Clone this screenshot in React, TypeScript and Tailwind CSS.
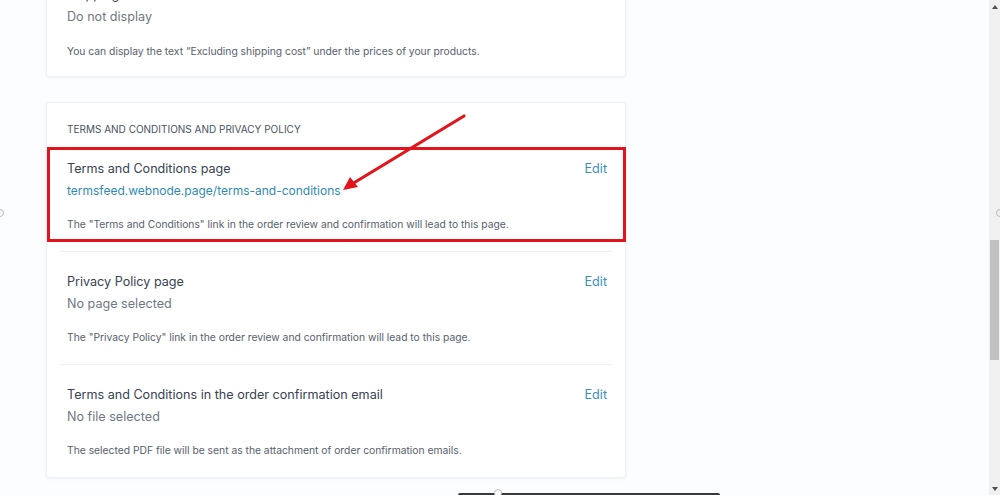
import React from 'react';

interface SettingRowProps {
  title: string;
  value: string;
  isLink?: boolean;
  description: string;
  divider?: boolean;
}

const SettingRow: React.FC<SettingRowProps> = ({ title, value, isLink, description, divider }) => {
  return (
    <div className={`px-[7px] ${divider ? 'border-t border-[#eceef1]' : ''}`}>
      <div className="flex items-start justify-between pt-[21px]">
        <div className="text-[12.6px] leading-[18px] text-[#364352]">{title}</div>
        <button className="text-[12.6px] leading-[18px] text-[#3b8fbf] mr-[-2px]">Edit</button>
      </div>
      <div className={`mt-[4px] leading-[18px] ${isLink ? 'text-[12px] text-[#2f8bb1]' : 'text-[12.6px] text-[#6f7882]'}`}>
        {value}
      </div>
      <div className="mt-[17px] pb-[20px] text-[10.3px] leading-[14px] text-[#56616c]">{description}</div>
    </div>
  );
};

const App: React.FC = () => {
  return (
    <div
      className="relative w-[1000px] h-[495px] overflow-hidden bg-[#fcfdfe]"
      style={{ fontFamily: 'Inter, "Liberation Sans", sans-serif' }}
    >
      <div className="w-[989px] h-full pl-[46px] pt-0">
        {/* shipping card, scrolled partly off the top */}
        <div className="w-[580px] -mt-[25px] bg-white border border-[#eef0f3] rounded-[3px] shadow-[0_1px_3px_rgba(30,50,80,0.06)] px-[20px]">
          <div className="pt-[10px] text-[12.6px] leading-[18px] text-[#364352]">Shipping cost</div>
          <div className="mt-[4px] text-[12.6px] leading-[18px] text-[#6f7882]">Do not display</div>
          <div className="mt-[18px] pb-[18px] text-[10.3px] leading-[14px] text-[#56616c]">
            You can display the text “Excluding shipping cost” under the prices of your products.
          </div>
        </div>

        {/* terms card */}
        <div className="relative w-[580px] mt-[25px] bg-white border border-[#eef0f3] rounded-[3px] shadow-[0_1px_3px_rgba(30,50,80,0.06)] px-[13px]">
          <div className="px-[7px] pt-[19px] pb-[3px] text-[10px] leading-[14px] text-[#465260] uppercase">
            Terms and Conditions and Privacy Policy
          </div>
          <SettingRow
            title="Terms and Conditions page"
            value="termsfeed.webnode.page/terms-and-conditions"
            isLink
            description={'The "Terms and Conditions" link in the order review and confirmation will lead to this page.'}
          />
          <SettingRow
            title="Privacy Policy page"
            value="No page selected"
            description={'The "Privacy Policy" link in the order review and confirmation will lead to this page.'}
            divider
          />
          <SettingRow
            title="Terms and Conditions in the order confirmation email"
            value="No file selected"
            description="The selected PDF file will be sent as the attachment of order confirmation emails."
            divider
          />

          {/* red annotation box */}
          <div className="absolute left-0 top-[44px] w-[579px] h-[95px] border-[3px] border-[#e3141b] pointer-events-none"></div>
        </div>
      </div>

      {/* annotation arrow */}
      <svg className="absolute left-0 top-0 pointer-events-none" width="1000" height="495">
        <line x1="464" y1="116" x2="352" y2="184" stroke="#e3141b" strokeWidth="3.2" strokeLinecap="round" />
        <polygon points="343,190 350,177 358,187" fill="#e3141b" />
      </svg>

      {/* scrollbar */}
      <div className="absolute right-0 top-0 w-[11px] h-full bg-[#f0f0f0] flex flex-col items-center">
        <div className="mt-[5px] w-0 h-0 border-l-[3px] border-r-[3px] border-b-[4px] border-l-transparent border-r-transparent border-b-[#505050]"></div>
        <div className="mt-[231px] w-[9px] h-[120px] bg-[#c1c1c1]"></div>
        <div className="mt-auto mb-[4px] w-0 h-0 border-l-[3px] border-r-[3px] border-t-[4px] border-l-transparent border-r-transparent border-t-[#505050]"></div>
      </div>

      {/* edge handles */}
      <div className="absolute left-[-4px] top-[209px] w-[8px] h-[8px] rounded-full border border-[#bbbbbb]"></div>
      <div className="absolute right-[-4px] top-[209px] w-[8px] h-[8px] rounded-full border border-[#bbbbbb]"></div>

      {/* bottom bar */}
      <div className="absolute left-[458px] top-[493px] w-[262px] h-[4px] rounded-t-[2px] bg-[#3a3a3a]"></div>
      <div className="absolute left-[494px] top-[489px] w-[8px] h-[8px] rounded-full border border-[#bbbbbb] bg-white"></div>
    </div>
  );
};

export default App;
